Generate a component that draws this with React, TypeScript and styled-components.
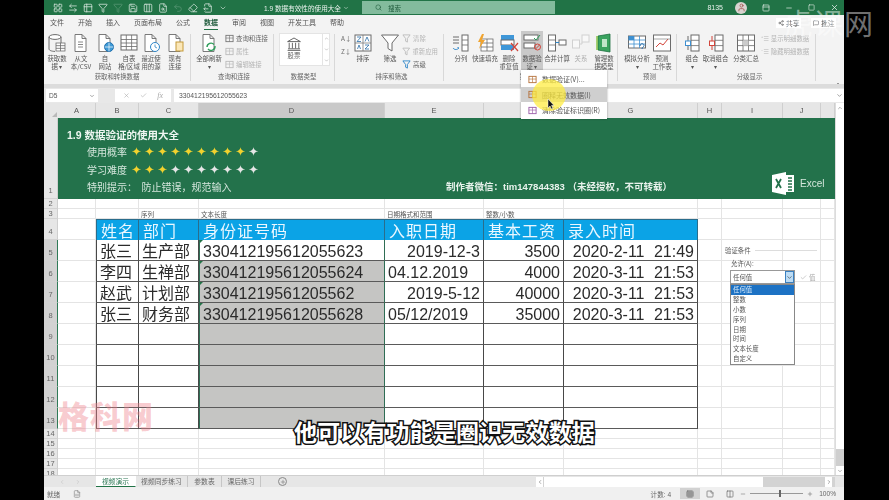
import React from 'react';
import styled, { createGlobalStyle } from 'styled-components';
import {
  LayoutGrid, ArrowLeftRight, Table2, Filter, Save, Columns3, FileSearch, Undo2, Eraser, FileOutput,
  ChevronDown, Search, User, PanelTop, Minus, Square, X, Check, Share2, MessageSquare, Plus, ChevronUp,
  ChevronLeft, ChevronRight, Grid3x3, StickyNote, FileSpreadsheet, Columns2,
} from 'lucide-react';

const CJK = `"Noto Sans CJK SC", "Liberation Sans", sans-serif`;
const MIX = `"Liberation Sans", "Noto Sans CJK SC", sans-serif`;

const Global = createGlobalStyle`
  html, body { margin: 0; padding: 0; background: #000; }
  #root { width: 889px; height: 500px; overflow: hidden; }
  * { box-sizing: border-box; }
`;

const Stage = styled.div`
  position: relative; width: 889px; height: 500px; background: #000;
  display: flex; justify-content: flex-start; padding-left: 44px; overflow: hidden;
  font-family: ${CJK};
`;
const Win = styled.div`
  width: 800px; height: 500px; display: flex; flex-direction: column; background: #f1f1f1;
  filter: blur(0.35px);
`;
const TitleBar = styled.div`
  height: 15px; flex: none; background: #217346; display: flex; align-items: center; color: #e8f1ec; position: relative;
`;
const Quick = styled.div`
  width: 220px; display: flex; align-items: center; gap: 5px; padding-left: 9px; flex: none;
`;
const QIcon = styled.span<{ $faded?: boolean }>`
  display: inline-flex; width: 10px; justify-content: center; opacity: ${p => (p.$faded ? 0.25 : 0.85)};
`;
const DocTitle = styled.div`
  width: 98px; flex: none; font-size: 6.6px; white-space: nowrap; display: flex; align-items: center; gap: 2px;
  font-family: ${MIX};
`;
const SearchBox = styled.div`
  width: 193px; height: 13px; flex: none; background: #83bb9d; color: #1f5b3c; display: flex; align-items: center;
  gap: 6px; padding-left: 13px; font-size: 6.5px;
`;
const TitleRight = styled.div`
  margin-left: auto; display: flex; align-items: center; font-family: ${MIX}; font-size: 7px; padding-right: 5px; gap: 15px;
`;
const Avatar = styled.span`
  width: 12px; height: 12px; border-radius: 50%; background: #d9d3d0; color: #a0504a; display: inline-flex;
  align-items: center; justify-content: center; margin-left: -3px;
`;

const Tabs = styled.div`
  height: 16px; flex: none; background: #f3f3f3; display: flex; align-items: center; padding-left: 6px; gap: 14px;
`;
const Tab = styled.div<{ $active?: boolean }>`
  height: 14px; font-size: 7px; line-height: 13px; color: ${p => (p.$active ? '#1f5b3c' : '#555')}; white-space: nowrap;
  font-weight: ${p => (p.$active ? 700 : 400)};
  border-bottom: ${p => (p.$active ? '1.5px solid #217346' : 'none')};
`;
const TabActions = styled.div`
  margin-left: auto; display: flex; gap: 10px; padding-right: 8px; font-size: 6.8px; color: #555;
`;
const TabAction = styled.span`
  display: inline-flex; align-items: center; gap: 2px; background: #fff; padding: 0 2px; width: 25px; white-space: nowrap;
  svg { flex: none; }
`;

const Ribbon = styled.div`
  height: 53px; flex: none; background: #f3f3f3; display: flex;
`;
const Group = styled.div<{ $w: number; $pad?: number; $last?: boolean }>`
  width: ${p => p.$w}px; flex: none; display: flex; flex-direction: column; padding-left: ${p => p.$pad ?? 0}px;
  position: relative;
  &::after { content: ''; position: absolute; right: 0; top: 3px; bottom: 3px; width: 1px; background: #d8d8d8; }
`;
const Tools = styled.div`
  height: 40px; display: flex; flex: none;
`;
const GroupLabel = styled.div`
  font-size: 6.4px; line-height: 11px; text-align: center; color: #666; white-space: nowrap; padding-right: 2px;
`;
const Big = styled.div<{ $w: number; $hot?: boolean; $faded?: boolean }>`
  width: ${p => p.$w}px; flex: none; display: flex; flex-direction: column; align-items: center; padding-top: 2px;
  background: ${p => (p.$hot ? '#c9c9c9' : 'transparent')}; opacity: ${p => (p.$faded ? 0.45 : 1)};
  font-size: 6.4px; line-height: 8px; color: #555; text-align: center; white-space: nowrap;
  svg { margin-bottom: 2px; flex: none; }
`;
const Stack = styled.div<{ $w: number; $left?: number }>`
  width: ${p => p.$w}px; flex: none; display: flex; flex-direction: column; gap: 2px; padding-top: 2px; margin-left: ${p => p.$left ?? 0}px;
`;
const StackItem = styled.div<{ $faded?: boolean }>`
  height: 11px; display: flex; align-items: center; gap: 2px; font-size: 6.4px; color: #666; white-space: nowrap;
  opacity: ${p => (p.$faded ? 0.45 : 1)};
`;
const Gallery = styled.div`
  width: 51px; height: 33px; margin: 2px 0 0 5px; background: #fff; border: 1px solid #e4e4e4; display: flex;
`;
const GalleryItem = styled.div`
  flex: 1; display: flex; flex-direction: column; align-items: center; font-size: 6.4px; color: #666; padding: 2px 14px 0 0;
  line-height: 8px;
`;
const Spin = styled.div`
  width: 7px; border-left: 1px solid #e4e4e4; display: flex; flex-direction: column; justify-content: space-between;
  align-items: center; color: #888; padding: 2px 0;
`;
const Collapse = styled.div`
  margin-left: auto; padding: 38px 2px 0 0; color: #666;
`;

const Band = styled.div`
  height: 4px; flex: none; background: #dcdcdc;
`;
const Formula = styled.div`
  height: 15px; flex: none; background: #e8e8e8; display: flex; padding: 1px 0 1px 2px; align-items: stretch;
`;
const NameBox = styled.div`
  width: 52px; background: #fff; display: flex; align-items: center; justify-content: space-between; padding: 0 3px;
  font-size: 6.6px; color: #555; font-family: ${MIX};
`;
const FxBox = styled.div`
  width: 56px; margin-left: 17px; background: #fff; display: flex; align-items: center; justify-content: space-around;
  color: #aaa; padding: 0 3px; font-family: "Liberation Serif", serif; font-style: italic; font-size: 8px;
`;
const FormulaInput = styled.div`
  width: 661px; margin-left: 3px; background: #fff; padding-left: 5px; font-size: 6.8px; line-height: 13px; color: #555; font-family: ${MIX};
`;
const FormulaEnd = styled.div`
  flex: 1; display: flex; align-items: center; justify-content: center; color: #666; background: #fff;
`;

const SheetArea = styled.div`
  height: 372px; flex: none; display: flex; overflow: hidden; background: #fff;
`;
const Sheet = styled.div`
  width: 791px; height: 372px; flex: none; overflow: hidden; display: grid;
  grid-template-columns: 14px 38px 43px 60px 186px 99px 80px 134px 24px 61px 38px 14px;
  grid-auto-rows: min-content;
`;
const Corner = styled.div`
  height: 15px; background: #e6e6e6; position: relative;
  &::after { content: ''; position: absolute; right: 1px; bottom: 1px; border-left: 5px solid transparent; border-bottom: 5px solid #b9b9b9; }
`;
const ColHead = styled.div<{ $active?: boolean }>`
  height: 15px; background: ${p => (p.$active ? '#c9c9c9' : '#e6e6e6')}; border-right: 1px solid #cfcfcf; text-align: center;
  font-size: 7.5px; line-height: 15px; color: #555; font-family: ${MIX};
`;
const RowHead = styled.div<{ $h: number; $active?: boolean }>`
  height: ${p => p.$h}px; background: ${p => (p.$active ? '#d2d2d2' : '#e6e6e6')};
  border-right: ${p => (p.$active ? '1px solid #2f7a57' : '1px solid #cfcfcf')}; border-bottom: 1px solid #d3d3d3;
  display: flex; align-items: flex-end; justify-content: center; color: #666; font-size: 7.5px; line-height: 9px; font-family: ${MIX};
  padding-bottom: ${p => (p.$h > 12 ? 3 : 0)}px;
`;
const Banner = styled.div`
  grid-column: 2 / 13; height: 81px; background: #23724b; display: flex; color: #dfeee6;
`;
const BannerLeft = styled.div`
  width: 388px; flex: none; padding: 10px 0 0 9px; font-size: 10px;
`;
const BannerTitle = styled.div`
  font-weight: 700; font-family: ${MIX}; font-size: 10.5px; line-height: 15px; color: #eef6f1;
`;
const BannerLine = styled.div`
  padding-left: 20px; display: flex; align-items: center; white-space: nowrap; color: #d4e6dc; height: 17.5px; line-height: 17px;
`;
const Stars = styled.span`
  display: inline-flex; margin-left: 3px; height: 17px; align-items: center;
`;
const Star = styled.span<{ $on: boolean }>`
  width: 13px; text-align: center; font-family: "DejaVu Sans", sans-serif; font-size: 12.5px; line-height: 17px;
  color: ${p => (p.$on ? '#f2d22e' : '#e6e6e6')};
`;
const Author = styled.div`
  flex: 1; align-self: flex-end; padding-bottom: 4px; font-size: 9.5px; line-height: 17px; font-weight: 700; white-space: nowrap; color: #e8f2ec;
  font-family: ${MIX};
`;
const BrandBox = styled.div`
  width: 63px; flex: none; display: flex; align-items: center; gap: 6px; padding: 54px 0 0 0; font-size: 10px; font-family: ${MIX}; color: #d5e7dc;
  align-self: flex-start;
  svg { flex: none; }
`;
const Blank = styled.div<{ $h: number; $span?: number }>`
  height: ${p => p.$h}px; border-right: 1px solid #e4e4e4; border-bottom: 1px solid #e4e4e4;
  font-size: 6.5px; line-height: 10px; color: #555; padding-left: 2px; white-space: nowrap; overflow: visible;
`;
const Head = styled.div<{ $first?: boolean; $last?: boolean }>`
  height: 21px; background: #0ba3e6; color: #eaf7ff; font-size: 16px; line-height: 20px; letter-spacing: 1px; padding-left: 4px;
  white-space: nowrap; border-top: 1px solid #2a6d8c; border-right: 1px solid #2a6d8c;
  border-left: ${p => (p.$first ? '1px solid #2a6d8c' : 'none')}; 
`;
const Data = styled.div<{ $first?: boolean; $right?: boolean; $gray?: boolean; $sel?: boolean; $flag?: boolean; $wide?: boolean }>`
  height: 21px; position: relative; background: ${p => (p.$gray ? '#c5c5c3' : '#fff')}; color: #2b2b2b; font-family: ${MIX};
  font-size: 16px; line-height: 20px; white-space: nowrap; overflow: hidden;
  text-align: ${p => (p.$right ? 'right' : 'left')}; padding: 2px 3px 0;
  word-spacing: ${p => (p.$wide ? '5px' : '0')};
  border-right: 1px solid ${p => (p.$sel ? '#2f6e55' : '#484848')}; border-bottom: 1px solid #5a5a5a;
  border-left: ${p => (p.$first ? '1px solid #484848' : p.$sel ? '1px solid #2f6e55' : 'none')};
  &::before {
    content: ''; display: ${p => (p.$flag ? 'block' : 'none')}; position: absolute; left: 0; top: 0;
    border-top: 3px solid #217346; border-right: 3px solid transparent;
  }
`;
const VScroll = styled.div`
  flex: 1; background: #f1f1f1; display: flex; flex-direction: column; align-items: stretch; border-left: 1px solid #dcdcdc;
`;
const ScrollBtn = styled.div`
  height: 9px; background: #fff; color: #666; display: flex; align-items: center; justify-content: center; flex: none;
`;
const VThumb = styled.div`
  height: 337px; background: #fff; flex: none;
`;
const VTrack = styled.div`
  flex: 1; background: #cfcfcf;
`;

const SheetBar = styled.div`
  height: 12px; flex: none; background: #e6e6e6; display: flex; align-items: stretch; border-top: 1px solid #cfcfcf;
`;
const SheetNav = styled.div`
  width: 52px; flex: none; display: flex; align-items: center; justify-content: center; gap: 10px; color: #bbb;
`;
const SheetTab = styled.div<{ $active?: boolean; $w: number }>`
  width: ${p => p.$w}px; flex: none; text-align: center; font-size: 6.8px; line-height: 11px; white-space: nowrap;
  background: ${p => (p.$active ? '#fff' : 'transparent')}; color: ${p => (p.$active ? '#2f7a57' : '#666')};
  border-bottom: ${p => (p.$active ? '1px solid #217346' : 'none')}; border-right: 1px solid ${p => (p.$active ? 'transparent' : '#c6c6c6')};
`;
const AddSheet = styled.div`
  margin-left: 17px; width: 9px; height: 9px; align-self: center; border: 1px solid #888; border-radius: 50%; color: #666;
  display: flex; align-items: center; justify-content: center; flex: none;
`;
const HScroll = styled.div`
  margin-left: 249px; flex: 1; display: flex; align-items: center; background: #d3d3d3; height: 10px; align-self: center; gap: 1px;
`;
const HBtn = styled.div`
  width: 7px; height: 10px; flex: none; background: #fff; color: #555; display: flex; align-items: center; justify-content: center;
`;
const HThumb = styled.div`
  width: 219px; height: 10px; flex: none; background: #fff;
`;
const HEnd = styled.div`
  margin-left: auto; margin-right: 3px; width: 7px; height: 10px; background: #fff; color: #555; display: flex; align-items: center; justify-content: center;
`;
const HEndGap = styled.div`
  width: 9px; flex: none; background: #e6e6e6;
`;

const Status = styled.div`
  height: 13px; flex: none; background: #f0f0f0; display: flex; align-items: center; font-size: 6.6px; color: #666; padding-left: 3px;
`;
const StatusIcon = styled.span`
  margin-left: 13px; display: inline-flex; color: #888;
`;
const StatusRight = styled.div`
  margin-left: auto; display: flex; align-items: center; font-family: ${MIX};
`;
const CountLabel = styled.span`
  margin-right: 9px;
`;
const ZoomLabel = styled.span`
  margin: 0 8px 0 6px;
`;
const ViewBtn = styled.span<{ $active?: boolean }>`
  width: 20px; height: 11px; display: inline-flex; align-items: center; justify-content: center; color: #666;
  background: ${p => (p.$active ? '#d2d2d2' : 'transparent')};
`;
const Slider = styled.div`
  width: 53px; height: 1px; background: #999; margin: 0 4px 0 4px; position: relative;
  &::after { content: ''; position: absolute; left: 29px; top: -3px; width: 2px; height: 7px; background: #666; }
`;

const Menu = styled.div`
  position: absolute; left: 521px; top: 70px; width: 86px; height: 49px; background: #fff; box-shadow: 0 0 2px rgba(0,0,0,.35);
  display: flex; flex-direction: column; justify-content: center; font-size: 7px; color: #555; filter: blur(0.3px);
`;
const MenuRow = styled.div<{ $hot?: boolean }>`
  height: 15.5px; display: flex; align-items: center; gap: 5px; padding-left: 7px; white-space: nowrap;
  background: ${p => (p.$hot ? '#cfcfcf' : 'transparent')};
`;
const Spot = styled.div`
  position: absolute; left: 532px; top: 79px; width: 34px; height: 32px; border-radius: 50%; background: rgba(255, 236, 60, .72);
`;
const Pointer = styled.svg`
  position: absolute; left: 547px; top: 99px;
`;
const Panel = styled.div`
  position: absolute; left: 725px; top: 246px; width: 92px; font-size: 6.4px; color: #555; filter: blur(0.3px);
`;
const PanelHead = styled.div`
  display: flex; align-items: center; gap: 4px; line-height: 9px; white-space: nowrap;
  &::after { content: ''; flex: 1; height: 1px; background: #ddd; }
`;
const PanelLabel = styled.div`
  padding-left: 6px; margin-top: 4px; line-height: 9px; height: 11px;
`;
const PanelField = styled.div`
  margin-left: 5px; display: flex; align-items: center; gap: 5px;
`;
const Select = styled.div`
  width: 65px; height: 14px; background: #fff; border: 1px solid #999; display: flex; justify-content: space-between; align-items: center; padding-left: 2px; flex: none;
`;
const SelectBtn = styled.span`
  width: 9px; height: 12px; background: #bcdcf5; border: 1px solid #3a80c0; display: flex; align-items: center; justify-content: center; color: #333;
`;
const Ignore = styled.span`
  display: inline-flex; align-items: center; gap: 2px; color: #aaa;
`;
const OptionList = styled.div`
  margin-left: 5px; width: 65px; border: 1px solid #888; background: #fff; display: flex; flex-direction: column;
`;
const Option = styled.div<{ $on?: boolean }>`
  height: 9.9px; line-height: 9.9px; padding-left: 2px; background: ${p => (p.$on ? '#1d72c4' : 'transparent')}; color: ${p => (p.$on ? '#dcecfa' : '#555')};
`;
const Watermark = styled.div`
  position: absolute; left: 58px; top: 394px; font-size: 31px; line-height: 42px; font-weight: 900; color: rgba(240, 130, 140, .42); white-space: nowrap; letter-spacing: 1px;
`;
const Subtitle = styled.div`
  position: absolute; left: 294px; top: 414px; font-size: 23px; line-height: 34px; font-weight: 700; color: #fff; white-space: nowrap; letter-spacing: .15px;
  -webkit-text-stroke: 3px #111; paint-order: stroke fill;
`;
const CourseMark = styled.div`
  position: absolute; left: 784px; top: 3px; font-size: 29px; line-height: 38px; color: rgba(255, 255, 255, .45); white-space: nowrap; letter-spacing: 1px;
`;

type IK = 'db' | 'text' | 'web' | 'table' | 'recent' | 'link' | 'refresh' | 'bank' | 'sort' | 'funnel' | 'split' | 'flash' | 'dedup' | 'valid' | 'merge' | 'rel' | 'model' | 'whatif' | 'forecast' | 'grp' | 'ungrp' | 'sub';
const G = '#6b6b6b';
const DocShape = () => <path d="M4 1.5h7l4 4v13H4z M11 1.5v4h4" fill="#fff" stroke={G} strokeWidth=".9" />;
const Cells = ({ x, y, w, h, c = G }: { x: number; y: number; w: number; h: number; c?: string }) => (
  <g fill="#fff" stroke={c} strokeWidth=".8">
    <rect x={x} y={y} width={w} height={h} />
    <path d={`M${x} ${y + h / 3}h${w}M${x} ${y + (2 * h) / 3}h${w}M${x + w / 2} ${y}v${h}`} />
  </g>
);
const RIcon = ({ k, s = 20 }: { k: IK; s?: number }) => (
  <svg width={s} height={s} viewBox="0 0 20 20" fill="none">
    {k === 'db' && <><ellipse cx="8" cy="4" rx="6" ry="2.4" fill="#fff" stroke={G} /><path d="M2 4v12c0 1.3 2.6 2.4 6 2.4M14 4v6" stroke={G} /><Cells x={9} y={10} w={9} h={8} /></>}
    {k === 'text' && <><DocShape /><path d="M7 9h5M7 11.5h5M7 14h5" stroke={G} strokeWidth=".8" /></>}
    {k === 'web' && <><DocShape /><circle cx="14" cy="14" r="4.5" fill="#3f9ad6" stroke="#1f6fae" /><path d="M9.5 14h9M14 9.5v9" stroke="#fff" strokeWidth=".7" /></>}
    {k === 'table' && <><rect x="2" y="2" width="16" height="15" fill="#fff" stroke={G} /><path d="M2 6.5h16M2 10h16M2 13.5h16M7.3 2v15M12.6 2v15" stroke={G} strokeWidth=".8" /></>}
    {k === 'recent' && <><DocShape /><circle cx="14" cy="14" r="4.5" fill="#fff" stroke="#2e86c8" /><path d="M14 11.5V14l2 1" stroke="#2e86c8" strokeWidth=".8" /></>}
    {k === 'link' && <><DocShape /><rect x="11" y="9" width="7" height="9" fill="#fbe7b8" stroke="#c49a3a" /></>}
    {k === 'refresh' && <><DocShape /><path d="M8 14a4 4 0 0 1 7-2.5M16 13a4 4 0 0 1-7 3" stroke="#2f9e5b" strokeWidth="1.4" /></>}
    {k === 'bank' && <path d="M2 7 10 2.5 18 7zM4 8.5v7M8 8.5v7M12 8.5v7M16 8.5v7M2.5 16h15M2 18h16" stroke="#555" strokeWidth="1.1" />}
    {k === 'sort' && <><rect x="2" y="2" width="16" height="16" fill="#fff" stroke={G} /><path d="M10 2v16M2 10h16" stroke={G} strokeWidth=".7" /><path d="M4 4h4L4 8.5h4M12 8.5l2-4.5 2 4.5M4.5 16l1.5-4 1.500 4M12 12h4l-4 4h4" stroke="#2c6ea8" strokeWidth=".8" /></>}
    {k === 'funnel' && <path d="M1.500 2h17l-6.500 8v8l-4-2.500V10z" fill="#fff" stroke={G} />}
    {k === 'split' && <><path d="M2 4h6M2 7h6M2 10h6" stroke={G} /><path d="M2 15c1.500 2 4 2 6 0l-1.500-.5" stroke="#2e86c8" /><rect x="11" y="2" width="6" height="16" fill="#fff" stroke={G} /><path d="M11 7h6M11 12h6" stroke={G} strokeWidth=".8" /></>}
    {k === 'flash' && <><Cells x={6} y={6} w={12} h={12} /><path d="M7 1 3 9h3l-2 7 6-9H7l2-6z" fill="#f0a430" /></>}
    {k === 'dedup' && <><rect x="2" y="2" width="13" height="5" fill="#3f97d8" /><rect x="2" y="7" width="13" height="5" fill="#fff" stroke={G} /><rect x="2" y="12" width="13" height="5" fill="#3f97d8" /><path d="m12 10 7 8M19 10l-7 8" stroke="#d2453b" strokeWidth="1.200" /></>}
    {k === 'valid' && <><rect x="2" y="2" width="14" height="5" fill="#fff" stroke={G} /><rect x="2" y="10" width="11" height="5" fill="#fff" stroke={G} /><path d="m12 5 2 2 4-5" stroke="#2f9e5b" /><circle cx="15.500" cy="14" r="3" stroke="#d2453b" /><path d="M13.500 16l4-4" stroke="#d2453b" /></>}
    {k === 'merge' && <><rect x="1.500" y="2" width="7" height="16" fill="#fff" stroke={G} /><path d="M1.500 7h7M1.500 12h7" stroke={G} strokeWidth=".8" /><rect x="12" y="7" width="7" height="5" fill="#fff" stroke={G} /><path d="M8.500 9.500H12" stroke="#2e86c8" /></>}
    {k === 'rel' && <><rect x="1.500" y="7" width="7" height="8" fill="#fff" stroke="#aaa" /><rect x="11" y="2" width="7" height="7" fill="#fff" stroke="#aaa" /><path d="M8.500 11H11V9" stroke="#aaa" /></>}
    {k === 'model' && <><path d="M4 3 16 1v18L4 17z" fill="#3aa35f" stroke="#1d7040" strokeWidth=".8" /><path d="M8 6h5v8H8z" fill="#bfe6c9" /><path d="M3 3v14" stroke="#8bc34a" strokeWidth="1.500" /></>}
    {k === 'whatif' && <><rect x="1.500" y="3" width="17" height="12" fill="#fff" stroke={G} /><path d="M1.500 7h17M1.500 11h17M7 3v12M12.500 3v12" stroke="#3d8fd0" strokeWidth=".8" /><rect x="1.500" y="3" width="5.500" height="4" fill="#3d8fd0" /><path d="M13 13c0-3 4-3 4-.5 0 1.500-2 1.500-2 3.500" stroke="#2d6ea8" /></>}
    {k === 'forecast' && <><rect x="1.500" y="2" width="17" height="16" fill="#fff" stroke={G} /><path d="m4 14 4-4 3 2 5-6" stroke="#d2453b" /><path d="M1.500 6h17" stroke={G} strokeWidth=".6" /></>}
    {k === 'grp' && <><rect x="9" y="2" width="8" height="16" fill="#fff" stroke={G} /><path d="M9 7.300h8M9 12.600h8" stroke={G} strokeWidth=".8" /><path d="M6 3v14" stroke={G} /><rect x="3.500" y="8" width="5" height="4.500" fill="#fff" stroke="#3d8fd0" /></>}
    {k === 'ungrp' && <><rect x="9" y="2" width="8" height="16" fill="#fff" stroke={G} /><path d="M9 7.300h8M9 12.600h8" stroke={G} strokeWidth=".8" /><path d="M6 3v14" stroke="#d2453b" /><rect x="3.500" y="8" width="5" height="4.500" fill="#fff" stroke="#d2453b" /></>}
    {k === 'sub' && <><rect x="1.500" y="2" width="17" height="16" fill="#fff" stroke={G} /><path d="M1.500 7.300h17M1.500 12.600h17M7 2v16M12.500 2v16" stroke={G} strokeWidth=".8" /><rect x="7" y="7.300" width="5.500" height="5.300" fill="#ccc" /></>}
  </svg>
);
const Mini = ({ c = '#777', s = 9 }: { c?: string; s?: number }) => (
  <svg width={s} height={s} viewBox="0 0 10 10" fill="none"><rect x="1" y="1.500" width="8" height="7" stroke={c} /><path d="M1 4.500h8M5 1.500v7" stroke={c} strokeWidth=".7" /></svg>
);
const Hairline = ({ c = '#777' }: { c?: string }) => (
  <svg width="9" height="9" viewBox="0 0 10 10" fill="none"><path d="M1 1h8L6 5v4L4 8V5z" stroke={c} /></svg>
);

const tabs = ['文件', '开始', '插入', '页面布局', '公式', '数据', '审阅', '视图', '开发工具', '帮助'];
const cols = ['A', 'B', 'C', 'D', 'E', 'F', 'G', 'H', 'I', 'J', 'K'];
const people: [string, string, string, string, boolean, string, string][] = [
  ['张三', '生产部', '330412195612055623', '2019-12-3', true, '3500', '2020-2-11 21:49'],
  ['李四', '生禅部', '330412195612055624', '04.12.2019', false, '4000', '2020-3-11 21:53'],
  ['赵武', '计划部', '33041219561205562', '2019-5-12', true, '40000', '2020-3-11 21:53'],
  ['张三', '财务部', '330412195612055628', '05/12/2019', false, '35000', '2020-3-11 21:53'],
];
const heads = ['姓名', '部门', '身份证号码', '入职日期', '基本工资', '录入时间'];
const options = ['任何值', '整数', '小数', '序列', '日期', '时间', '文本长度', '自定义'];

const BigBtn = ({ k, w, lines, hot, faded }: { k: IK; w: number; lines: string[]; hot?: boolean; faded?: boolean }) => (
  <Big $w={w} $hot={hot} $faded={faded}>
    <RIcon k={k} />
    {lines.map(l => <span key={l}>{l}</span>)}
  </Big>
);

const Tail = () => (<><Blank $h={21} /><Blank $h={21} /><Blank $h={21} /><Blank $h={21} /></>);

export default function App() {
  const dataRows = Array.from({ length: 9 }, (_, i) => people[i]);
  return (
    <>
      <Global />
      <Stage>
        <Win>
          <TitleBar>
            <Quick>
              <QIcon><LayoutGrid size={10} /></QIcon>
              <QIcon><ArrowLeftRight size={10} /></QIcon>
              <QIcon><Table2 size={10} /></QIcon>
              <QIcon><Filter size={10} /></QIcon>
              <QIcon $faded><Filter size={10} /></QIcon>
              <QIcon><Save size={10} /></QIcon>
              <QIcon><Columns3 size={10} /></QIcon>
              <QIcon><FileSearch size={10} /></QIcon>
              <QIcon $faded><Undo2 size={10} /></QIcon>
              <QIcon><Eraser size={10} /></QIcon>
              <QIcon><FileOutput size={10} /></QIcon>
              <QIcon><ChevronDown size={8} /></QIcon>
            </Quick>
            <DocTitle>1.9 数据有效性的使用大全 <ChevronDown size={6} /></DocTitle>
            <SearchBox><Search size={7} />搜索</SearchBox>
            <TitleRight>
              <span>8135</span>
              <Avatar><User size={9} /></Avatar>
              <PanelTop size={8} />
              <Minus size={8} />
              <Square size={7} />
              <X size={9} />
            </TitleRight>
          </TitleBar>
          <Tabs>
            {tabs.map(t => <Tab key={t} $active={t === '数据'}>{t}</Tab>)}
            <TabActions>
              <TabAction><Share2 size={6} />共享</TabAction>
              <TabAction><MessageSquare size={6} />批注</TabAction>
            </TabActions>
          </Tabs>
          <Ribbon>
            <Group $w={147} $pad={1}>
              <Tools>
                <BigBtn k="db" w={24} lines={['获取数', '据 ▾']} />
                <BigBtn k="text" w={24} lines={['从文', '本/CSV']} />
                <BigBtn k="web" w={24} lines={['自', '网站']} />
                <BigBtn k="table" w={24} lines={['自表', '格/区域']} />
                <BigBtn k="recent" w={20} lines={['最近使', '用的源']} />
                <BigBtn k="link" w={28} lines={['现有', '连接']} />
              </Tools>
              <GroupLabel>获取和转换数据</GroupLabel>
            </Group>
            <Group $w={83} $pad={5}>
              <Tools>
                <BigBtn k="refresh" w={26} lines={['全部刷新', '▾']} />
                <Stack $w={50} $left={3}>
                  <StackItem><Mini />查询和连接</StackItem>
                  <StackItem $faded><Mini />属性</StackItem>
                  <StackItem $faded><Mini />编辑链接</StackItem>
                </Stack>
              </Tools>
              <GroupLabel>查询和连接</GroupLabel>
            </Group>
            <Group $w={61}>
              <Tools>
                <Gallery>
                  <GalleryItem><RIcon k="bank" s={16} />股票</GalleryItem>
                  <Spin><ChevronUp size={5} /><ChevronDown size={5} /><ChevronDown size={5} /></Spin>
                </Gallery>
              </Tools>
              <GroupLabel>数据类型</GroupLabel>
            </Group>
            <Group $w={109} $pad={6}>
              <Tools>
                <Stack $w={13}>
                  <StackItem>A↓</StackItem>
                  <StackItem>Z↓</StackItem>
                </Stack>
                <BigBtn k="sort" w={18} lines={['排序']} />
                <BigBtn k="funnel" w={36} lines={['筛选']} />
                <Stack $w={36} $left={-6}>
                  <StackItem $faded><Hairline />清除</StackItem>
                  <StackItem $faded><Hairline />重新应用</StackItem>
                  <StackItem><Hairline c="#2e86c8" />高级</StackItem>
                </Stack>
              </Tools>
              <GroupLabel>排序和筛选</GroupLabel>
            </Group>
            <Group $w={174} $pad={5}>
              <Tools>
                <BigBtn k="split" w={24} lines={['分列']} />
                <BigBtn k="flash" w={24} lines={['快速填充']} />
                <BigBtn k="dedup" w={24} lines={['删除', '重复值']} />
                <BigBtn k="valid" w={22} lines={['数据验', '证 ▾']} hot />
                <BigBtn k="merge" w={28} lines={['合并计算']} />
                <BigBtn k="rel" w={20} lines={['关系']} faded />
                <BigBtn k="model" w={26} lines={['管理数', '据模型']} />
              </Tools>
              <GroupLabel>数据工具</GroupLabel>
            </Group>
            <Group $w={59} $pad={6}>
              <Tools>
                <BigBtn k="whatif" w={26} lines={['模拟分析', '▾']} />
                <BigBtn k="forecast" w={24} lines={['预测', '工作表']} />
              </Tools>
              <GroupLabel>预测</GroupLabel>
            </Group>
            <Group $w={139} $pad={8}>
              <Tools>
                <BigBtn k="grp" w={14} lines={['组合', '▾']} />
                <BigBtn k="ungrp" w={33} lines={['取消组合', '▾']} />
                <BigBtn k="sub" w={28} lines={['分类汇总']} />
                <Stack $w={50} $left={1}>
                  <StackItem $faded>⁺≡ 显示明细数据</StackItem>
                  <StackItem $faded>⁻≡ 隐藏明细数据</StackItem>
                </Stack>
              </Tools>
              <GroupLabel>分级显示</GroupLabel>
            </Group>
            <Collapse><ChevronUp size={8} /></Collapse>
          </Ribbon>
          <Band />
          <Formula>
            <NameBox>D5<ChevronDown size={6} /></NameBox>
            <FxBox><X size={7} /><Check size={7} /><span>fx</span></FxBox>
            <FormulaInput>330412195612055623</FormulaInput>
            <FormulaEnd><ChevronDown size={7} /></FormulaEnd>
          </Formula>
          <SheetArea>
            <Sheet>
              <Corner />
              {cols.map(c => <ColHead key={c} $active={c === 'D'}>{c === 'K' ? '' : c}</ColHead>)}

              <RowHead $h={81}>1</RowHead>
              <Banner>
                <BannerLeft>
                  <BannerTitle>1.9 数据验证的使用大全</BannerTitle>
                  <BannerLine>使用概率<Stars>{Array.from({ length: 10 }, (_, i) => <Star key={i} $on={i < 9}>✦</Star>)}</Stars></BannerLine>
                  <BannerLine>学习难度<Stars>{Array.from({ length: 10 }, (_, i) => <Star key={i} $on={i < 3}>✦</Star>)}</Stars></BannerLine>
                  <BannerLine>特别提示：&nbsp;&nbsp;防止错误，规范输入</BannerLine>
                </BannerLeft>
                <Author>制作者微信：tim147844383 （未经授权，不可转载）</Author>
                <BrandBox>
                  <svg width="22" height="23" viewBox="0 0 22 23">
                    <path d="M0 3 14 0v23L0 20z" fill="#fff" />
                    <rect x="14" y="3" width="8" height="17" fill="#fff" />
                    <path d="M16 6h4M16 9h4M16 12h4M16 15h4M16 18h4" stroke="#23724b" strokeWidth="1.300" />
                    <path d="m4 7 5 9M9 7l-5 9" stroke="#23724b" strokeWidth="1.800" />
                  </svg>
                  Excel
                </BrandBox>
              </Banner>

              <RowHead $h={10}>2</RowHead>
              {cols.map(c => <Blank key={c} $h={10} />)}

              <RowHead $h={10}>3</RowHead>
              <Blank $h={10} /><Blank $h={10} />
              <Blank $h={10}>序列</Blank>
              <Blank $h={10}>文本长度</Blank>
              <Blank $h={10}>日期格式和范围</Blank>
              <Blank $h={10}>整数/小数</Blank>
              <Blank $h={10} /><Blank $h={10} /><Blank $h={10} /><Blank $h={10} /><Blank $h={10} />

              <RowHead $h={21}>4</RowHead>
              <Blank $h={21} />
              {heads.map((h, i) => <Head key={h} $first={i === 0}>{h}</Head>)}
              <Tail />

              {dataRows.map((p, i) => {
                const row = i + 5;
                return (
                  <React.Fragment key={row}>
                    <RowHead $h={21} $active>{row}</RowHead>
                    <Blank $h={21} />
                    <Data $first>{p?.[0]}</Data>
                    <Data>{p?.[1]}</Data>
                    <Data $sel $gray={i > 0} $flag={!!p}>{p?.[2]}</Data>
                    <Data $right={p?.[4]}>{p?.[3]}</Data>
                    <Data $right>{p?.[5]}</Data>
                    <Data $right $wide>{p?.[6]}</Data>
                    <Tail />
                  </React.Fragment>
                );
              })}

              {[14, 15, 16, 17, 18].map(r => (
                <React.Fragment key={r}>
                  <RowHead $h={10}>{r}</RowHead>
                  {cols.map(c => <Blank key={c} $h={10} />)}
                </React.Fragment>
              ))}
            </Sheet>
            <VScroll>
              <ScrollBtn><ChevronUp size={6} /></ScrollBtn>
              <VThumb />
              <VTrack />
              <ScrollBtn><ChevronDown size={6} /></ScrollBtn>
            </VScroll>
          </SheetArea>
          <SheetBar>
            <SheetNav><ChevronLeft size={6} /><ChevronRight size={6} /></SheetNav>
            <SheetTab $active $w={40}>视频演示</SheetTab>
            <SheetTab $w={52}>视频同步练习</SheetTab>
            <SheetTab $w={34}>参数表</SheetTab>
            <SheetTab $w={39}>课后练习</SheetTab>
            <AddSheet><Plus size={6} /></AddSheet>
            <HScroll>
              <HBtn><ChevronLeft size={6} /></HBtn>
              <HThumb />
              <HEnd><ChevronRight size={6} /></HEnd>
            </HScroll>
            <HEndGap />
          </SheetBar>
          <Status>
            就绪
            <StatusIcon><FileSpreadsheet size={8} /></StatusIcon>
            <StatusRight>
              <CountLabel>计数: 4</CountLabel>
              <ViewBtn $active><Grid3x3 size={8} /></ViewBtn>
              <ViewBtn><StickyNote size={8} /></ViewBtn>
              <ViewBtn><Columns2 size={8} /></ViewBtn>
              <Minus size={6} />
              <Slider />
              <Plus size={6} />
              <ZoomLabel>100%</ZoomLabel>
            </StatusRight>
          </Status>
        </Win>

        <CourseMark>虎课网</CourseMark>
        <Menu>
          <MenuRow><Mini c="#b5713a" />数据验证(V)...</MenuRow>
          <MenuRow $hot><Mini c="#b5713a" />圈释无效数据(I)</MenuRow>
          <MenuRow><Mini c="#9a5ca8" />清除验证标识圈(R)</MenuRow>
        </Menu>
        <Spot />
        <Pointer width="8" height="11" viewBox="0 0 8 11"><path d="M1 0v9l2-2 1.500 3 1.500-.7L4.500 6.500H7z" fill="#111" stroke="#fff" strokeWidth=".5" /></Pointer>
        <Panel>
          <PanelHead>验证条件</PanelHead>
          <PanelLabel>允许(A):</PanelLabel>
          <PanelField>
            <Select>任何值<SelectBtn><ChevronDown size={7} /></SelectBtn></Select>
            <Ignore><Check size={7} />值</Ignore>
          </PanelField>
          <OptionList>
            {options.map((o, i) => <Option key={o} $on={i === 0}>{o}</Option>)}
          </OptionList>
        </Panel>
        <Watermark>格科网</Watermark>
        <Subtitle>他可以有功能是圈识无效数据</Subtitle>
      </Stage>
    </>
  );
}
